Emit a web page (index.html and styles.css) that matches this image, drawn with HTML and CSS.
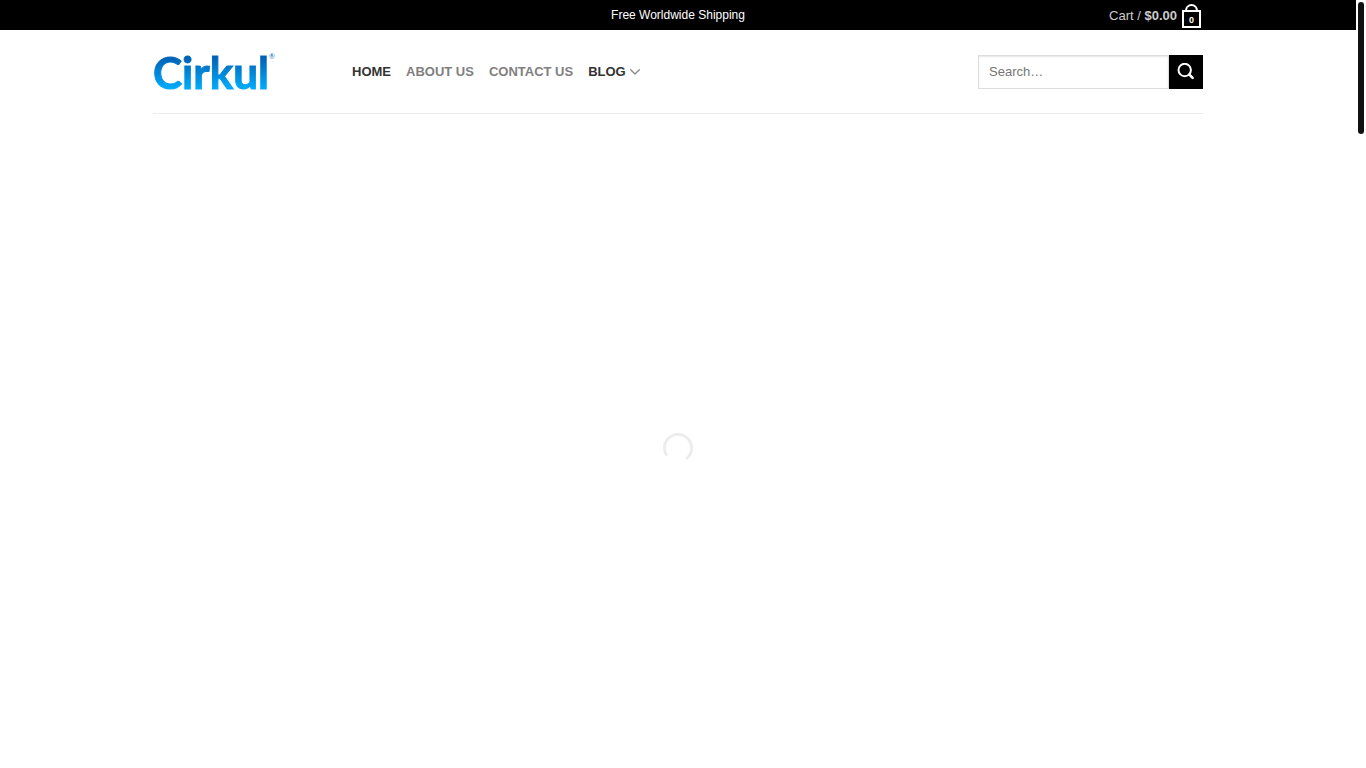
FILE: index.html
```html
<!DOCTYPE html>
<html lang="en">

<head>
    <meta charset="UTF-8">
    <meta name="viewport" content="width=device-width, initial-scale=1.0">
    <title>Cirkul</title>
    <link rel="stylesheet" href="styles.css">
</head>

<body>
    <header>
        <!-- Top bar -->
        <div class="top-bar">
            <div class="container top-inner">
                <p class="shipping">Free Worldwide Shipping</p>
                <a class="cart" href="#">
                    <span>Cart / <strong>$0.00</strong></span>
                    <span class="cart-icon">0</span>
                </a>
            </div>
        </div>

        <!-- Main header -->
        <div class="container">
            <div class="header-main">
                <a class="logo" href="#"><span class="logo-name">Cirkul</span><span class="logo-mark">®</span></a>
                <nav>
                    <a class="active" href="#">HOME</a>
                    <a href="#">ABOUT US</a>
                    <a href="#">CONTACT US</a>
                    <a class="active" href="#">BLOG
                        <svg width="11" height="6" viewBox="0 0 11 6" aria-hidden="true">
                            <path d="M1.7 0.7L6 5L10.3 0.7" fill="none" stroke="#888" stroke-width="1.3" stroke-linecap="round" />
                        </svg>
                    </a>
                </nav>
                <form class="search">
                    <input type="search" placeholder="Search…" aria-label="Search">
                    <button type="submit" aria-label="Submit search">
                        <svg width="18" height="18" viewBox="0 0 18 18" aria-hidden="true">
                            <circle cx="7.7" cy="7" r="6.2" fill="none" stroke="#fff" stroke-width="2" />
                            <path d="M12.4 11.7L15.6 14.9" stroke="#fff" stroke-width="2.6" stroke-linecap="round" />
                        </svg>
                    </button>
                </form>
            </div>
        </div>
    </header>

    <!-- Content is still loading -->
    <main>
        <svg class="spinner" width="30" height="30" viewBox="0 0 30 30" role="img" aria-label="Loading">
            <path d="M3.9 22.8A13.6 13.6 0 1 1 23 26" fill="none" stroke="#ececec" stroke-width="2.8" />
        </svg>
    </main>

    <div class="scroll-thumb"></div>
</body>

</html>
```

FILE: styles.css
```css
* {
    margin: 0;
    padding: 0;
    box-sizing: border-box;
}

body {
    min-height: 100vh;
    padding-right: 10px;
    display: flex;
    flex-direction: column;
    font-family: "Liberation Sans", Arial, sans-serif;
    font-size: 13px;
    background-color: #fff;
    color: #777;
}

a {
    color: inherit;
    text-decoration: none;
}

.container {
    max-width: 1080px;
    margin: 0 auto;
    padding: 0 15px;
}

/* Top bar */
.top-bar {
    background-color: #000;
}

.top-inner {
    display: grid;
    grid-template-columns: 1fr auto 1fr;
    align-items: center;
    height: 30px;
}

.shipping {
    grid-column: 2;
    font-size: 12px;
    color: #fff;
}

.cart {
    justify-self: end;
    display: flex;
    align-items: center;
    gap: 5px;
    padding-right: 2px;
    color: #ccc;
}

.cart-icon {
    position: relative;
    width: 19px;
    height: 18px;
    margin-top: 8px;
    border: 2px solid #fff;
    font-size: 9px;
    font-weight: bold;
    line-height: 16px;
    text-align: center;
    color: #fff;
}

/* Bag handle */
.cart-icon::before {
    content: "";
    position: absolute;
    left: 1px;
    bottom: 100%;
    width: 9px;
    height: 6px;
    border: 2px solid #fff;
    border-bottom: 0;
    border-radius: 8px 8px 0 0;
}

/* Main header */
.header-main {
    display: flex;
    align-items: center;
    height: 84px;
    border-bottom: 1px solid #ececec;
}

.logo {
    display: flex;
    align-items: flex-start;
    width: 169px;
    margin-right: 30px;
    font-family: Lato, "Liberation Sans", sans-serif;
}

.logo-name {
    font-size: 44px;
    font-weight: bold;
    line-height: 50px;
    background: linear-gradient(#0060b4 20%, #00a8f8 80%);
    background-clip: text;
    -webkit-background-clip: text;
    -webkit-text-stroke: 1px transparent;
    color: transparent;
}

.logo-mark {
    padding-top: 5px;
    font-size: 7px;
    color: #0a6cbc;
}

nav {
    display: flex;
    gap: 15px;
    font-weight: bold;
    color: #7f7f7f;
}

nav .active {
    color: #333;
}

nav svg {
    vertical-align: 1px;
}

.search {
    display: flex;
    margin-left: auto;
}

.search input {
    width: 191px;
    height: 34px;
    padding: 0 10px;
    border: 1px solid #ddd;
    border-radius: 0;
    box-shadow: inset 0 1px 2px rgba(0, 0, 0, 0.1);
    font: inherit;
    color: #333;
    appearance: none;
}

.search button {
    display: flex;
    align-items: center;
    justify-content: center;
    width: 34px;
    height: 34px;
    border: 0;
    background-color: #000;
    cursor: pointer;
}

/* Loading area */
main {
    flex: 1;
    display: flex;
    justify-content: center;
    align-items: center;
    padding-top: 14px;
}

.scroll-thumb {
    position: fixed;
    top: 2px;
    right: 2px;
    width: 6px;
    height: 132px;
    border-radius: 3px;
    background-color: #111;
}
```
